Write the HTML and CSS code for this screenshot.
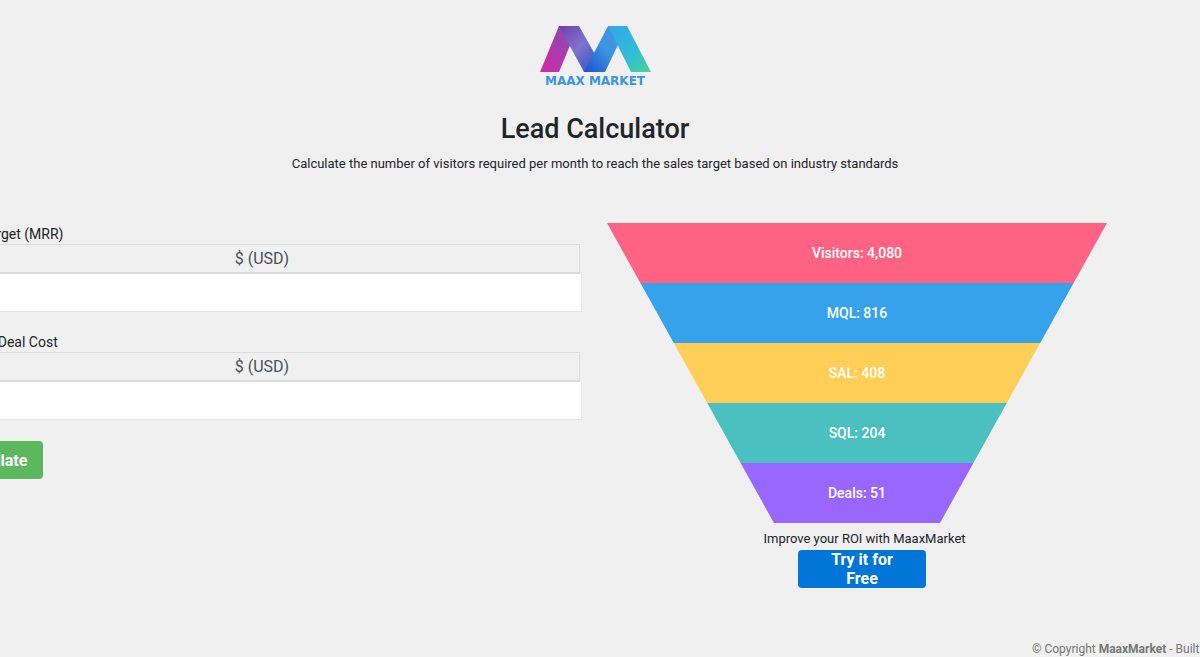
FILE: index.html
```html
<!DOCTYPE html>
<html lang="en">
<head>
    <meta charset="UTF-8">
    <meta name="viewport" content="width=device-width, initial-scale=1.0">
    <title>Lead Calculator</title>
    <link rel="stylesheet" href="styles.css">
</head>

<body>
    <div class="page">
        <header class="header">
            <div class="logo">
                <svg class="logo-mark" width="112" height="46" viewBox="0 0 112 46">
                    <defs>
                        <linearGradient id="legA" x1="0" y1="1" x2="1" y2="0">
                            <stop offset="0" stop-color="#d428a8"/>
                            <stop offset="1" stop-color="#7d4fb4"/>
                        </linearGradient>
                        <linearGradient id="legB" x1="0" y1="0" x2="1" y2="1">
                            <stop offset="0" stop-color="#6f3fae"/>
                            <stop offset="0.45" stop-color="#7f74cc"/>
                            <stop offset="1" stop-color="#1c48c4"/>
                        </linearGradient>
                        <linearGradient id="legC" x1="0" y1="1" x2="1" y2="0">
                            <stop offset="0" stop-color="#1d4ec8"/>
                            <stop offset="0.5" stop-color="#3a96e6"/>
                            <stop offset="1" stop-color="#4a8fdc"/>
                        </linearGradient>
                        <linearGradient id="legD" x1="0" y1="0" x2="1" y2="1">
                            <stop offset="0" stop-color="#35a6ea"/>
                            <stop offset="0.55" stop-color="#2fbcd8"/>
                            <stop offset="1" stop-color="#48d49a"/>
                        </linearGradient>
                    </defs>
                    <polygon points="1,46 20,0 39,0 20,46" fill="url(#legA)"/>
                    <polygon points="20,0 40,0 66,46 45,46" fill="url(#legB)"/>
                    <polygon points="45,46 69,0 88,0 66,46" fill="url(#legC)"/>
                    <polygon points="69,0 88,0 112,46 92,46" fill="url(#legD)"/>
                </svg>
                <div class="logo-text">MAAX MARKET</div>
            </div>
            <h1>Lead Calculator</h1>
            <p class="subtitle">Calculate the number of visitors required per month to reach the sales target based on industry standards</p>
        </header>

        <main class="columns">
            <form class="calc-form">
                <div class="field">
                    <label for="target">Sales Target (MRR)</label>
                    <div class="addon">$ (USD)</div>
                    <input id="target" class="text-input" type="text">
                </div>
                <div class="field">
                    <label for="cost">Average Deal Cost</label>
                    <div class="addon">$ (USD)</div>
                    <input id="cost" class="text-input" type="text">
                </div>
                <button class="btn btn-green" type="button">Calculate</button>
            </form>

            <section class="results">
                <div class="funnel">
                    <div class="step step-1">Visitors: 4,080</div>
                    <div class="step step-2">MQL: 816</div>
                    <div class="step step-3">SAL: 408</div>
                    <div class="step step-4">SQL: 204</div>
                    <div class="step step-5">Deals: 51</div>
                </div>
                <div class="cta">
                    <p>Improve your ROI with MaaxMarket</p>
                    <button class="btn btn-blue" type="button">Try it for Free</button>
                </div>
            </section>
        </main>

        <footer class="footer">© Copyright <strong>MaaxMarket</strong> - Built with love</footer>
    </div>
</body>

</html>
```

FILE: styles.css
```css
html,
body {
    height: 100%;
}

body {
    margin: 0;
    overflow: hidden;
    background-color: #f0f0f0;
    color: #212529;
    font-family: Roboto, Arial, sans-serif;
    font-size: 14px;
}

.page {
    display: flex;
    flex-direction: column;
    width: 1302px;
    height: 100%;
    margin-left: -56px;
}

.header {
    display: flex;
    flex-direction: column;
    align-items: center;
    padding-top: 26px;
}

.logo {
    display: flex;
    flex-direction: column;
    align-items: center;
    width: 112px;
}

.logo-mark {
    display: block;
}

.logo-text {
    margin-top: 2px;
    color: #3a97dd;
    font-family: "DejaVu Sans", sans-serif;
    font-size: 12px;
    font-weight: bold;
    line-height: 14px;
    white-space: nowrap;
}

h1 {
    margin: 23px 0 0;
    font-size: 27px;
    font-weight: 500;
    line-height: 36px;
}

.subtitle {
    margin: 7px 0 0;
    font-size: 13px;
    line-height: 20px;
}

.columns {
    display: flex;
    gap: 25px;
    margin-top: 49px;
}

.calc-form {
    width: 638px;
    padding-top: 2px;
}

.field {
    display: flex;
    flex-direction: column;
    margin-bottom: 21px;
}

.field label {
    line-height: 19px;
    font-size: 14px;
}

.addon {
    width: 636px;
    height: 30px;
    border: 1px solid #dcdcdc;
    border-bottom-width: 2px;
    box-sizing: border-box;
    font-size: 16px;
    line-height: 27px;
    text-align: center;
    color: #495057;
}

.text-input {
    display: block;
    width: 638px;
    height: 38px;
    padding: 0;
    border: 1px solid #e6e6e6;
    border-top: 0;
    box-sizing: border-box;
    background-color: #fff;
}

.btn {
    height: 38px;
    padding: 0 16px;
    border: 0;
    border-radius: 4px;
    color: #fff;
    font-family: Roboto, Arial, sans-serif;
    font-size: 16px;
    font-weight: bold;
}

.btn-green {
    width: 99px;
    background-color: #5cb85c;
}

.btn-blue {
    width: 128px;
    margin-right: 5px;
    background-color: #0275d8;
}

.results {
    display: flex;
    flex-direction: column;
    width: 500px;
}

.funnel {
    display: flex;
    flex-direction: column;
}

.step {
    height: 60px;
    color: #fff;
    font-weight: 500;
    line-height: 60px;
    text-align: center;
}

.step-1 {
    background-color: #ff6384;
    clip-path: polygon(0 0, 500px 0, 466.6px 100%, 33.4px 100%);
}

.step-2 {
    background-color: #36a2eb;
    clip-path: polygon(33.4px 0, 466.6px 0, 433.2px 100%, 66.8px 100%);
}

.step-3 {
    background-color: #ffce56;
    clip-path: polygon(66.8px 0, 433.2px 0, 399.8px 100%, 100.2px 100%);
}

.step-4 {
    background-color: #4bc0c0;
    clip-path: polygon(100.2px 0, 399.8px 0, 366.4px 100%, 133.6px 100%);
}

.step-5 {
    background-color: #9966ff;
    clip-path: polygon(133.6px 0, 366.4px 0, 333px 100%, 167px 100%);
}

.cta {
    display: flex;
    flex-direction: column;
    align-items: center;
    padding-left: 15px;
}

.cta p {
    margin: 7px 0 2px;
    font-size: 13px;
    line-height: 18px;
}

.footer {
    margin-top: auto;
    padding-left: 1088px;
    color: #777;
    font-size: 12px;
    line-height: 16px;
    white-space: nowrap;
}
```
